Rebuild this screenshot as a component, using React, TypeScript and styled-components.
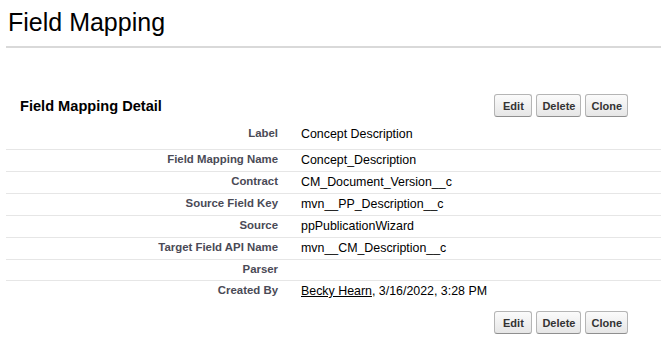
import React from 'react'
import styled, { createGlobalStyle } from 'styled-components'

const GlobalStyle = createGlobalStyle`
  body {
    margin: 0;
    background: #fff;
    font-family: "Liberation Sans", Arial, Helvetica, sans-serif;
    color: #000;
  }
`

const Page = styled.div`
  padding-left: 6px;
`

const PageTitle = styled.h1`
  margin: 7px 0 0;
  padding: 0 0 9px 2px;
  font-size: 25px;
  line-height: 30px;
  font-weight: normal;
  border-bottom: 2px solid #d9d9d9;
`

const Block = styled.section`
  margin-top: 46px;
`

const BlockHeader = styled.div`
  display: flex;
  align-items: center;
  justify-content: space-between;
  padding: 0 33px 0 14px;
`

const BlockTitle = styled.h2`
  margin: 0;
  font-size: 14.6px;
  line-height: 16px;
  font-weight: bold;
`

const ButtonRow = styled.div`
  display: flex;
  gap: 4px;
`

const Button = styled.button`
  height: 23px;
  min-width: 38px;
  padding: 0 5px;
  font-family: inherit;
  font-size: 11px;
  font-weight: bold;
  color: #333;
  background: linear-gradient(#fbfbfb, #e6e6e6);
  border: 1px solid #b5b5b5;
  border-bottom-color: #8f8f8f;
  border-radius: 3px;
  cursor: pointer;
`

const Detail = styled.div`
  margin-top: 7px;
`

const Row = styled.div<{ $first?: boolean; $last?: boolean }>`
  display: grid;
  grid-template-columns: 283px 1fr;
  padding: 3px 0 ${p => (p.$first ? '8px' : '4px')};
  border-bottom: ${p => (p.$last ? 'none' : '1px solid #e6e6e6')};
`

const Label = styled.div`
  padding-right: 11px;
  text-align: right;
  font-size: 11.4px;
  line-height: 13px;
  font-weight: bold;
  color: #4a4a56;
`

const Value = styled.div`
  padding-left: 12px;
  font-size: 12.4px;
  line-height: 14px;
  color: #000;
`

const UserLink = styled.a`
  color: #000;
  text-decoration: underline;
`

const Footer = styled.div`
  display: flex;
  justify-content: flex-end;
  padding: 9px 33px 0 0;
`

const fields: [string, string][] = [
  ['Label', 'Concept Description'],
  ['Field Mapping Name', 'Concept_Description'],
  ['Contract', 'CM_Document_Version__c'],
  ['Source Field Key', 'mvn__PP_Description__c'],
  ['Source', 'ppPublicationWizard'],
  ['Target Field API Name', 'mvn__CM_Description__c'],
  ['Parser', ''],
]

const Buttons = () => (
  <ButtonRow>
    <Button>Edit</Button>
    <Button>Delete</Button>
    <Button>Clone</Button>
  </ButtonRow>
)

const App = () => {
  return (
    <Page>
      <GlobalStyle />
      <PageTitle>Field Mapping</PageTitle>

      <Block>
        <BlockHeader>
          <BlockTitle>Field Mapping Detail</BlockTitle>
          <Buttons />
        </BlockHeader>

        <Detail>
          {fields.map(([label, value], i) => (
            <Row key={label} $first={i === 0}>
              <Label>{label}</Label>
              <Value>{value}</Value>
            </Row>
          ))}
          <Row $last>
            <Label>Created By</Label>
            <Value>
              <UserLink href="#">Becky Hearn</UserLink>, 3/16/2022, 3:28 PM
            </Value>
          </Row>
        </Detail>

        <Footer>
          <Buttons />
        </Footer>
      </Block>
    </Page>
  )
}

export default App
